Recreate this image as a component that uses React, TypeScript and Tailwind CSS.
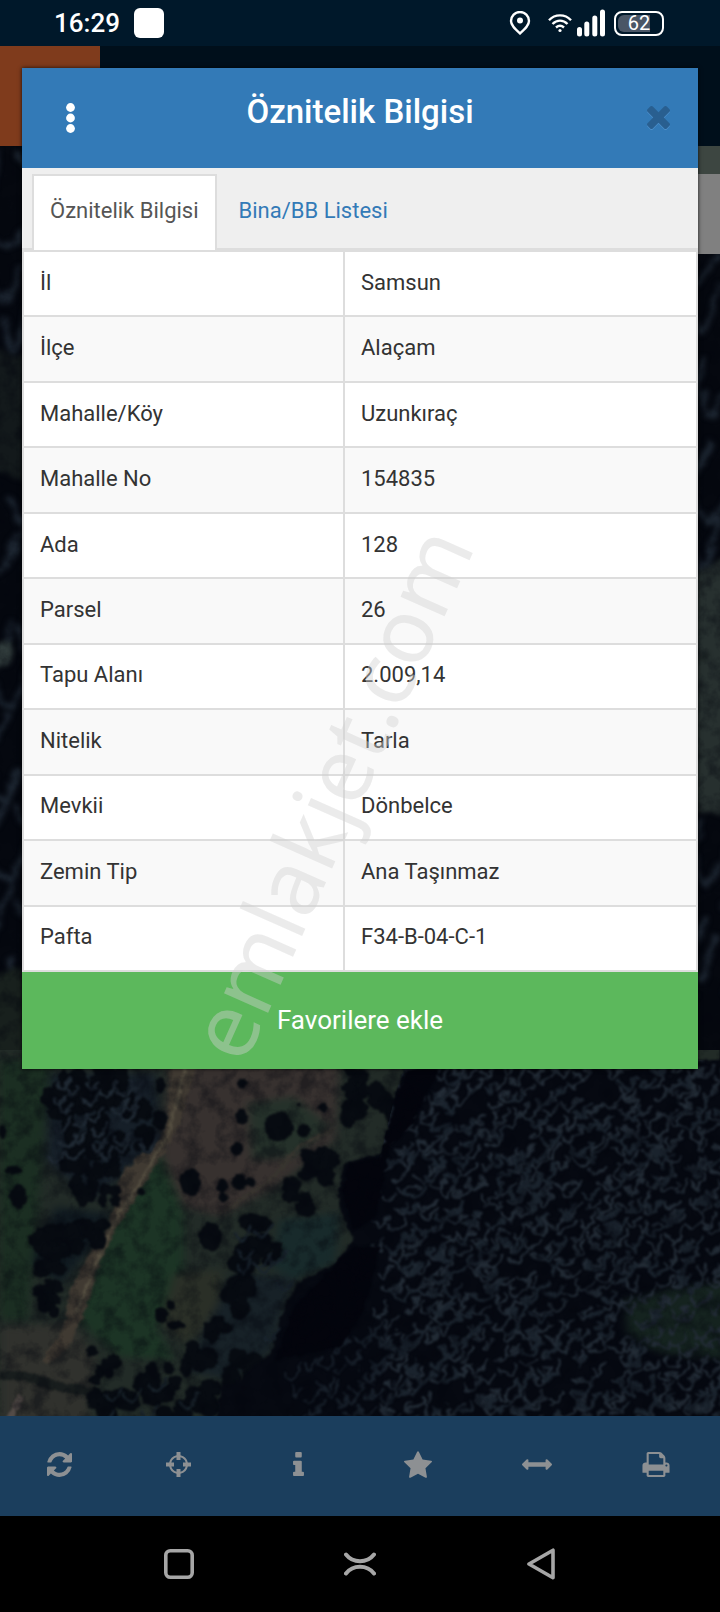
import React from "react";

const FIELD_ROWS: [string, string][] = [
  ["İl", "Samsun"],
  ["İlçe", "Alaçam"],
  ["Mahalle/Köy", "Uzunkıraç"],
  ["Mahalle No", "154835"],
  ["Ada", "128"],
  ["Parsel", "26"],
  ["Tapu Alanı", "2.009,14"],
  ["Nitelik", "Tarla"],
  ["Mevkii", "Dönbelce"],
  ["Zemin Tip", "Ana Taşınmaz"],
  ["Pafta", "F34-B-04-C-1"],
];

function seeded(seed: number) {
  let s = seed;
  return () => {
    s = (s * 1664525 + 1013904223) % 4294967296;
    return s / 4294967296;
  };
}

/* Lit edges of the tree crowns: short crescents in rows that climb to the right. */
function crowns(seed: number, x0: number, y0: number, x1: number, y1: number, skip = 0.12) {
  const rnd = seeded(seed);
  let d = "";
  let row = 0;
  for (let y = y0; y < y1 + (x1 - x0) * 0.5; y += 46) {
    row += 1;
    for (let x = x0 + (row % 2) * 20; x < x1; x += 42) {
      const drop = rnd() < skip;
      const px = Math.round(x + rnd() * 24 - 12);
      const py = Math.round(y - (x - x0) * 0.5 + rnd() * 26 - 13);
      const w = Math.round(10 + rnd() * 9);
      const h = Math.round(14 + rnd() * 18);
      const up = Math.round(24 + rnd() * 30);
      if (drop || py < y0 || py > y1) continue;
      d += `M${px} ${py}q${Math.round(w / 3)} ${h} ${w} ${h}q${Math.round(w / 2)} ${-Math.round(h / 3)} ${w + 4} ${-up}`;
    }
  }
  return d;
}

/* Round bushes scattered around the given centres. */
function bushes(seed: number, spots: number[][], count: number) {
  const rnd = seeded(seed);
  const out: { x: number; y: number; rx: number; ry: number }[] = [];
  spots.forEach(([x, y, r]) => {
    for (let i = 0; i < count; i += 1) {
      out.push({
        x: Math.round(x + (rnd() - 0.5) * r * 1.2),
        y: Math.round(y + (rnd() - 0.5) * r * 1.6),
        rx: Math.round(r * (0.25 + rnd() * 0.2)),
        ry: Math.round(r * (0.35 + rnd() * 0.35)),
      });
    }
  });
  return out;
}

const GROVE = bushes(
  7,
  [
    [150, 70, 60], [240, 70, 60], [300, 120, 55], [200, 150, 60], [130, 120, 50],
    [180, 230, 55], [260, 270, 50], [320, 230, 35], [170, 290, 50], [230, 310, 40],
    [180, 380, 50], [235, 410, 35], [200, 510, 50], [120, 560, 60], [160, 540, 50],
    [110, 600, 45], [100, 700, 40], [110, 740, 35], [690, 310, 50], [640, 410, 50],
    [560, 510, 60], [540, 580, 50], [520, 710, 50], [470, 820, 40], [425, 890, 50],
    [300, 990, 60], [230, 930, 40], [360, 960, 50], [530, 650, 40], [520, 940, 60],
    [790, 140, 60], [770, 60, 45], [850, 130, 50], [220, 1040, 50], [350, 1050, 60],
    [430, 1030, 60], [600, 580, 30],
  ],
  6,
);

const LONE_TREES = [
  [608, 200, 30, 44], [662, 212, 15, 20], [526, 170, 13, 24], [516, 268, 14, 22],
  [415, 368, 23, 40], [485, 378, 12, 20], [486, 412, 10, 16], [520, 366, 17, 24],
  [545, 366, 12, 14], [458, 530, 25, 42], [40, 410, 20, 36], [308, 396, 9, 10],
  [352, 766, 14, 26], [372, 736, 9, 14], [200, 874, 12, 18], [528, 70, 10, 16],
  [350, 76, 12, 24], [348, 180, 16, 28], [704, 142, 8, 14], [652, 134, 6, 8],
  [30, 330, 18, 12], [6, 215, 8, 20], [385, 795, 22, 12],
];

const FOREST =
  "M885 0L1600 0V1100H470L480 985L520 960L590 880L620 740L650 665L730 610L770 540L750 480L735 400L750 310L830 280L860 110Z";

function SatelliteMap() {
  return (
    <svg
      className="absolute inset-0 h-full w-full"
      viewBox="0 0 720 1370"
      preserveAspectRatio="xMidYMax slice"
      aria-hidden="true"
    >
      <defs>
        <filter id="soft" x="-5%" y="-5%" width="110%" height="110%" colorInterpolationFilters="sRGB">
          <feTurbulence type="fractalNoise" baseFrequency="0.06" numOctaves="2" seed="9" result="n" />
          <feDisplacementMap in="SourceGraphic" in2="n" scale="14" xChannelSelector="R" yChannelSelector="G" />
          <feGaussianBlur stdDeviation="2.600" />
        </filter>
        <filter id="crown" x="-5%" y="-5%" width="110%" height="110%" colorInterpolationFilters="sRGB">
          <feTurbulence type="fractalNoise" baseFrequency="0.03" numOctaves="2" seed="3" result="n" />
          <feDisplacementMap in="SourceGraphic" in2="n" scale="40" xChannelSelector="R" yChannelSelector="G" />
          <feGaussianBlur stdDeviation="2.600" />
        </filter>
        <filter id="wide" x="-20%" y="-20%" width="140%" height="140%" colorInterpolationFilters="sRGB">
          <feGaussianBlur stdDeviation="11" />
        </filter>
        <filter id="grain" x="0" y="0" width="100%" height="100%" colorInterpolationFilters="sRGB">
          <feTurbulence type="fractalNoise" baseFrequency="0.06" numOctaves="4" seed="4" />
          <feColorMatrix values="0 0 0 0 0.01  0 0 0 0 0.02  0 0 0 0 0.05  2.8 0 0 0 -1.15" />
        </filter>
        <clipPath id="forestClip">
          <path d={FOREST} />
        </clipPath>
      </defs>
      <rect width="720" height="1370" fill="#05080f" />
      <g filter="url(#soft)">
        <path d={crowns(31, -20, 90, 30, 1020)} fill="none" stroke="#1c2530" strokeWidth="6" />
        <path d={crowns(12, 680, 90, 740, 1020)} fill="none" stroke="#1c2530" strokeWidth="6" />
        <path d="M-10 300L30 310V440L-10 420Z" fill="#13191b" />
        <path d="M-10 600Q10 590 14 606Q12 622 -10 620Z" fill="#303b3b" />
        <path d="M-10 925L40 920V1050H-10Z" fill="#18201d" />
        <path d="M690 530L740 505V770L690 765Z" fill="#27302f" />
        <circle cx="704" cy="612" r="5" fill="#161d1d" />
      </g>
      <g transform="translate(0 1014) scale(.459 .3333)">
        <rect y="-30" width="1568" height="1160" fill="#222b27" />
        <g filter="url(#wide)">
          <path d="M0 0H110L80 500L60 780H0Z" fill="#1b2e22" />
          <path d="M370 0H740L730 240L600 380L480 470L400 440L350 290Z" fill="#37312f" />
          <path d="M540 130L640 110L720 200L640 290L550 300Z" fill="#25312a" />
          <path d="M350 280L400 460L400 640L340 800L380 900L260 890L170 780L240 500Z" fill="#1c3425" />
          <path d="M380 640L480 630L480 780L400 850L350 780Z" fill="#2a2f27" />
          <path d="M0 800L160 790L210 900L190 1100H0Z" fill="#30312d" />
          <path d="M610 480L740 460L730 610L640 660L590 620Z" fill="#182a2b" />
          <path d="M510 640L640 650L590 880L500 960L400 930Z" fill="#172127" />
          <path d="M110 40H340L350 250L200 420L100 300Z" fill="#161f28" />
          <path d="M120 440L240 460L190 580L130 680L70 600Z" fill="#111b21" />
        </g>
        <g filter="url(#soft)">
          <path
            d="M368 20L428 20L392 190L356 280L306 390L256 500L222 590L190 740L150 860L104 915L90 905L140 800L150 700L190 590L236 500L250 430L262 350L300 290L350 240L368 160Z"
            fill="#403a32"
          />
          <path d="M404 20L370 210L304 370L250 480L210 610L165 760" fill="none" stroke="#565042" strokeWidth="6" />
          <path d="M0 945L60 950L110 975L210 1000" fill="none" stroke="#181d1d" strokeWidth="28" />
          <path d="M20 1080L45 1010" fill="none" stroke="#544c48" strokeWidth="16" />
          <path d="M480 460L590 360L650 260L720 210" fill="none" stroke="#38352f" strokeWidth="8" />
        </g>
        <g filter="url(#soft)" fill="#070b11">
          {GROVE.map((b, i) => (
            <ellipse key={i} cx={b.x} cy={b.y} rx={b.rx} ry={b.ry} />
          ))}
          {LONE_TREES.map(([x, y, rx, ry], i) => (
            <ellipse key={`t${i}`} cx={x} cy={y} rx={rx} ry={ry} />
          ))}
        </g>
        <path d={FOREST} fill="#060911" filter="url(#soft)" />
        <g clipPath="url(#forestClip)">
          <path d="M1360 720L1460 690L1600 660V900L1440 880L1370 830Z" fill="#15231f" filter="url(#wide)" />
          <g filter="url(#crown)">
            <path d={crowns(5, 820, -40, 1620, 1130)} fill="none" stroke="#222b35" strokeWidth="8" />
            <path d={crowns(77, 835, -40, 1620, 1130, 0.6)} fill="none" stroke="#1a232d" strokeWidth="10" />
            <path d={crowns(19, 620, 800, 860, 1130)} fill="none" stroke="#171f29" strokeWidth="7" />
          </g>
          <g filter="url(#soft)">
            <path d="M885 30L960 20L900 190L850 260L820 470L770 510L745 400L760 310L830 290L860 120Z" fill="#03040c" />
            <path d="M770 560L830 560L790 760L740 860L600 900L640 740L720 630Z" fill="#03040c" />
          </g>
        </g>
        <g filter="url(#soft)">
          <path d={crowns(44, 110, 60, 320, 300)} fill="none" stroke="#202a34" strokeWidth="7" />
          <path d={crowns(45, 510, 480, 600, 920, 0.5)} fill="none" stroke="#19232d" strokeWidth="6" />
          <path d={crowns(46, 210, 930, 420, 1080, 0.5)} fill="none" stroke="#18222a" strokeWidth="6" />
        </g>
      </g>
      <rect width="720" height="1370" filter="url(#grain)" opacity=".4" />
    </svg>
  );
}

function StatusBar() {
  return (
    <div className="flex h-[46px] items-center justify-between bg-[#00182a] pr-[56px] pl-[54px] text-white">
      <div className="flex items-center gap-[14px]">
        <span className="text-[26px] leading-8 font-medium">16:29</span>
        <span className="h-[30px] w-[30px] rounded-md bg-white" />
      </div>
      <div className="flex items-center gap-[5px]">
        <svg className="mr-3 h-6 w-[22px]" viewBox="0 0 22 24" fill="none" aria-hidden="true">
          <path d="M11 22.500C6 18 2 14.500 2 10a9 9 0 0 1 18 0c0 4.500-4 8-9 12.500Z" stroke="#fff" strokeWidth="2.400" strokeLinejoin="round" />
          <circle cx="11" cy="9.500" r="3" fill="#fff" />
        </svg>
        <svg className="h-5 w-6" viewBox="0 0 24 20" fill="none" stroke="#fff" strokeWidth="2.400" aria-hidden="true">
          <path d="M1 7.200C7 .8 17 .8 23 7.200M4.500 11C9 6.500 15 6.500 19.500 11M8 14.500c2.500-2.300 5.500-2.300 8 0" />
          <circle cx="12" cy="17.500" r="1.600" fill="#fff" stroke="none" />
        </svg>
        <svg className="h-7 w-7" viewBox="0 0 28 28" stroke="#fff" strokeWidth="5" strokeLinecap="round" aria-hidden="true">
          <path d="M2.500 20.500v4.500M9.800 15v10M17.800 9v16M25.500 3v22" />
        </svg>
        <div className="relative ml-1 flex h-[25px] w-[50px] items-center justify-center rounded-lg border-2 border-white">
          <span className="absolute inset-y-[2px] left-[2px] w-8 rounded-l-md bg-[#4a5666]" />
          <span className="relative text-[20px] leading-5">62</span>
        </div>
      </div>
    </div>
  );
}

const TOOLS = [
  {
    label: "Yenile",
    box: "0 0 1536 1536",
    size: "h-[25px] w-[25px]",
    path: "M1511 928q0 5-1 7-64 268-268 434.500T764 1536q-146 0-282.500-55T238 1324l-129 129q-19 19-45 19t-45-19-19-45V960q0-26 19-45t45-19h448q26 0 45 19t19 45-19 45l-137 137q71 66 161 102t187 36q134 0 250-65t186-179q11-17 53-117 8-23 30-23h192q13 0 22.500 9.500t9.500 22.500zm25-800v448q0 26-19 45t-45 19h-448q-26 0-45-19t-19-45 19-45l138-138Q969 256 768 256q-134 0-250 65T332 500q-11 17-53 117-8 23-30 23H50q-13 0-22.500-9.500T18 608v-7q65-268 270-434.500T768 0q146 0 284 55.500T1297 212l130-129q19-19 45-19t45 19 19 45z",
  },
  {
    label: "Konum",
    box: "0 0 25 25",
    size: "h-[25px] w-[25px]",
    path: "M10.500 0h4v3.200a9.600 9.600 0 0 1 7.300 7.300H25v4h-3.200a9.600 9.600 0 0 1-7.300 7.300V25h-4v-3.200a9.600 9.600 0 0 1-7.300-7.300H0v-4h3.200a9.600 9.600 0 0 1 7.300-7.300zM10.500 5.300a7.600 7.600 0 0 0-5.200 5.200H8v4H5.300a7.600 7.600 0 0 0 5.200 5.200V17h4v2.700a7.600 7.600 0 0 0 5.200-5.200H17v-4h2.700a7.600 7.600 0 0 0-5.200-5.200V8h-4z",
  },
  {
    label: "Bilgi",
    box: "0 128 640 1408",
    size: "h-[24px] w-[11px]",
    path: "M640 1344v128q0 26-19 45t-45 19H64q-26 0-45-19t-19-45v-128q0-26 19-45t45-19h64V896H64q-26 0-45-19t-19-45V704q0-26 19-45t45-19h384q26 0 45 19t19 45v576h64q26 0 45 19t19 45zM512 192v192q0 26-19 45t-45 19H192q-26 0-45-19t-19-45V192q0-26 19-45t45-19h256q26 0 45 19t19 45z",
  },
  {
    label: "Favoriler",
    box: "0 32 1664 1587",
    size: "h-[27px] w-[28px]",
    path: "M1664 647q0 22-26 48l-363 354 86 500q1 7 1 20 0 21-10.500 35.500T1321 1619q-19 0-40-12l-449-236-449 236q-22 12-40 12-21 0-31.500-14.500T301 1569q0-6 2-20l86-500L25 695Q0 668 0 647q0-37 56-46l502-73L783 73q19-41 49-41t49 41l225 455 502 73q56 9 56 46z",
  },
  {
    label: "Ölçüm",
    box: "0 576 1792 640",
    size: "h-[11px] w-[30px]",
    path: "M1792 896q0 26-19 45l-256 256q-19 19-45 19t-45-19-19-45v-128H384v128q0 26-19 45t-45 19-45-19L19 941Q0 922 0 896t19-45l256-256q19-19 45-19t45 19 19 45v128h1024V640q0-26 19-45t45-19 45 19l256 256q19 19 19 45z",
  },
  {
    label: "Yazdır",
    box: "0 128 1664 1536",
    size: "h-[25px] w-[28px]",
    path: "M384 1536h896v-256H384v256zm0-640h896V512h-160q-40 0-68-28t-28-68V256H384v640zm1152 64q0-26-19-45t-45-19-45 19-19 45 19 45 45 19 45-19 19-45zm128 0v416q0 13-9.500 22.500t-22.500 9.500h-224v160q0 40-28 68t-68 28H352q-40 0-68-28t-28-68v-160H32q-13 0-22.500-9.500T0 1376V960q0-79 56.500-135.500T192 768h64V224q0-40 28-68t68-28h672q40 0 88 20t76 48l152 152q28 28 48 76t20 88v256h64q79 0 135.500 56.500T1664 960z",
  },
];

function Toolbar() {
  return (
    <nav className="grid h-[100px] grid-cols-6 bg-[#1b3e5d] pr-1 pb-1">
      {TOOLS.map((t) => (
        <button key={t.label} type="button" aria-label={t.label} className="flex items-center justify-center text-[#8d9093]">
          <svg className={t.size} viewBox={t.box} fill="currentColor" fillRule="evenodd" aria-hidden="true">
            <path d={t.path} />
          </svg>
        </button>
      ))}
    </nav>
  );
}

function SystemNav() {
  return (
    <nav className="flex h-24 items-center justify-center gap-[150px] bg-black">
      <button type="button" aria-label="Son uygulamalar">
        <svg className="h-[30px] w-[30px]" viewBox="0 0 30 30" fill="none" stroke="#a6a6a6" strokeWidth="3.600" aria-hidden="true">
          <rect x="1.800" y="1.800" width="26.400" height="26.400" rx="4.500" />
        </svg>
      </button>
      <button type="button" aria-label="Ana ekran">
        <svg className="h-[30px] w-[32px]" viewBox="0 0 32 30" fill="none" stroke="#a6a6a6" strokeWidth="4" strokeLinecap="round" aria-hidden="true">
          <path d="M2 5.500C9 14.500 23 14.500 30 5.500M2 24.500C9 15.500 23 15.500 30 24.500" />
        </svg>
      </button>
      <button type="button" aria-label="Geri">
        <svg className="h-8 w-[30px]" viewBox="0 0 30 32" fill="none" stroke="#a6a6a6" strokeWidth="3.600" strokeLinejoin="round" aria-hidden="true">
          <path d="M27 2.200V29.800L3 16Z" />
        </svg>
      </button>
    </nav>
  );
}

const CROSS =
  "M1298 1322q0 40-28 68l-136 136q-28 28-68 28t-68-28L704 1232l-294 294q-28 28-68 28t-68-28l-136-136q-28-28-28-68t28-68l294-294-294-294q-28-28-28-68t28-68l136-136q28-28 68-28t68 28l294 294 294-294q28-28 68-28t68 28l136 136q28 28 28 68t-28 68l-294 294 294 294q28 28 28 68z";

function AttributeDialog() {
  return (
    <section
      role="dialog"
      aria-labelledby="dialog-title"
      className="relative mx-[22px] mt-[22px] shadow-[0_0_4px_rgba(0,0,0,0.8)]"
    >
      <header className="grid h-[100px] grid-cols-[1fr_auto_1fr] items-center bg-[#337ab7] pr-[28px] pl-[28px]">
        <button type="button" aria-label="Menü" className="justify-self-start px-3">
          <svg className="h-[30px] w-4" viewBox="0 0 16 30" fill="#fff" aria-hidden="true">
            <circle cx="8.500" cy="4.500" r="4.400" />
            <circle cx="8.500" cy="15" r="4.400" />
            <circle cx="8.500" cy="25.500" r="4.400" />
          </svg>
        </button>
        <h1 id="dialog-title" className="pb-3 text-[33px] leading-9 font-medium text-white">
          Öznitelik Bilgisi
        </h1>
        <button type="button" aria-label="Kapat" className="justify-self-end">
          <svg className="h-6 w-[23px]" viewBox="110 366 1188 1240" aria-hidden="true">
            <path d={CROSS} fill="#4d8fca" transform="translate(0 52)" />
            <path d={CROSS} fill="#295f90" />
          </svg>
        </button>
      </header>

      <div role="tablist" className="flex border-b-2 border-[#ddd] bg-[#efefef] px-[10px] pt-[6px]">
        <button
          type="button"
          role="tab"
          aria-selected="true"
          className="-mb-[2px] border-2 border-b-0 border-[#ddd] bg-white px-4 pt-[19px] pb-[23px] text-[22px] leading-8 text-[#555]"
        >
          Öznitelik Bilgisi
        </button>
        <button
          type="button"
          role="tab"
          aria-selected="false"
          className="px-[22px] pt-[21px] pb-[21px] text-[22px] leading-8 text-[#337ab7]"
        >
          Bina/BB Listesi
        </button>
      </div>

      <table className="h-[722px] w-full border-collapse bg-white text-[22px] leading-8 text-[#333]">
        <tbody>
          {FIELD_ROWS.map(([name, value]) => (
            <tr key={name} className="even:bg-[#f9f9f9]">
              <th scope="row" className="w-[321px] border-2 border-[#ddd] px-4 pb-[2px] text-left font-normal">
                {name}
              </th>
              <td className="border-2 border-[#ddd] px-4 pb-[2px]">{value}</td>
            </tr>
          ))}
        </tbody>
      </table>

      <button type="button" className="h-[97px] w-full bg-[#5cb85c] pb-[2px] text-[26px] leading-8 text-white">
        Favorilere ekle
      </button>

      <span className="pointer-events-none absolute top-[724px] left-[306px] -translate-x-1/2 -translate-y-1/2 -rotate-66 font-['Noto_Sans',sans-serif] text-[90px] leading-none whitespace-nowrap text-[#d1d1d1] opacity-42">
        emlakjet.com
      </span>
    </section>
  );
}

export default function App() {
  return (
    <div className="flex min-h-screen flex-col bg-black font-['Roboto','Noto_Sans',sans-serif]">
      <StatusBar />
      <main className="relative flex-1 overflow-hidden pb-8">
        <SatelliteMap />
        <div className="absolute inset-x-0 top-0 h-[100px] bg-[#000f1b]">
          <div className="h-full w-[100px] bg-[#7f3b1c]" />
        </div>
        <div className="absolute top-[100px] right-0 h-[108px] w-[120px] bg-[#808080]">
          <div className="h-7 bg-[#3d4641]" />
        </div>
        <AttributeDialog />
      </main>
      <Toolbar />
      <SystemNav />
    </div>
  );
}
